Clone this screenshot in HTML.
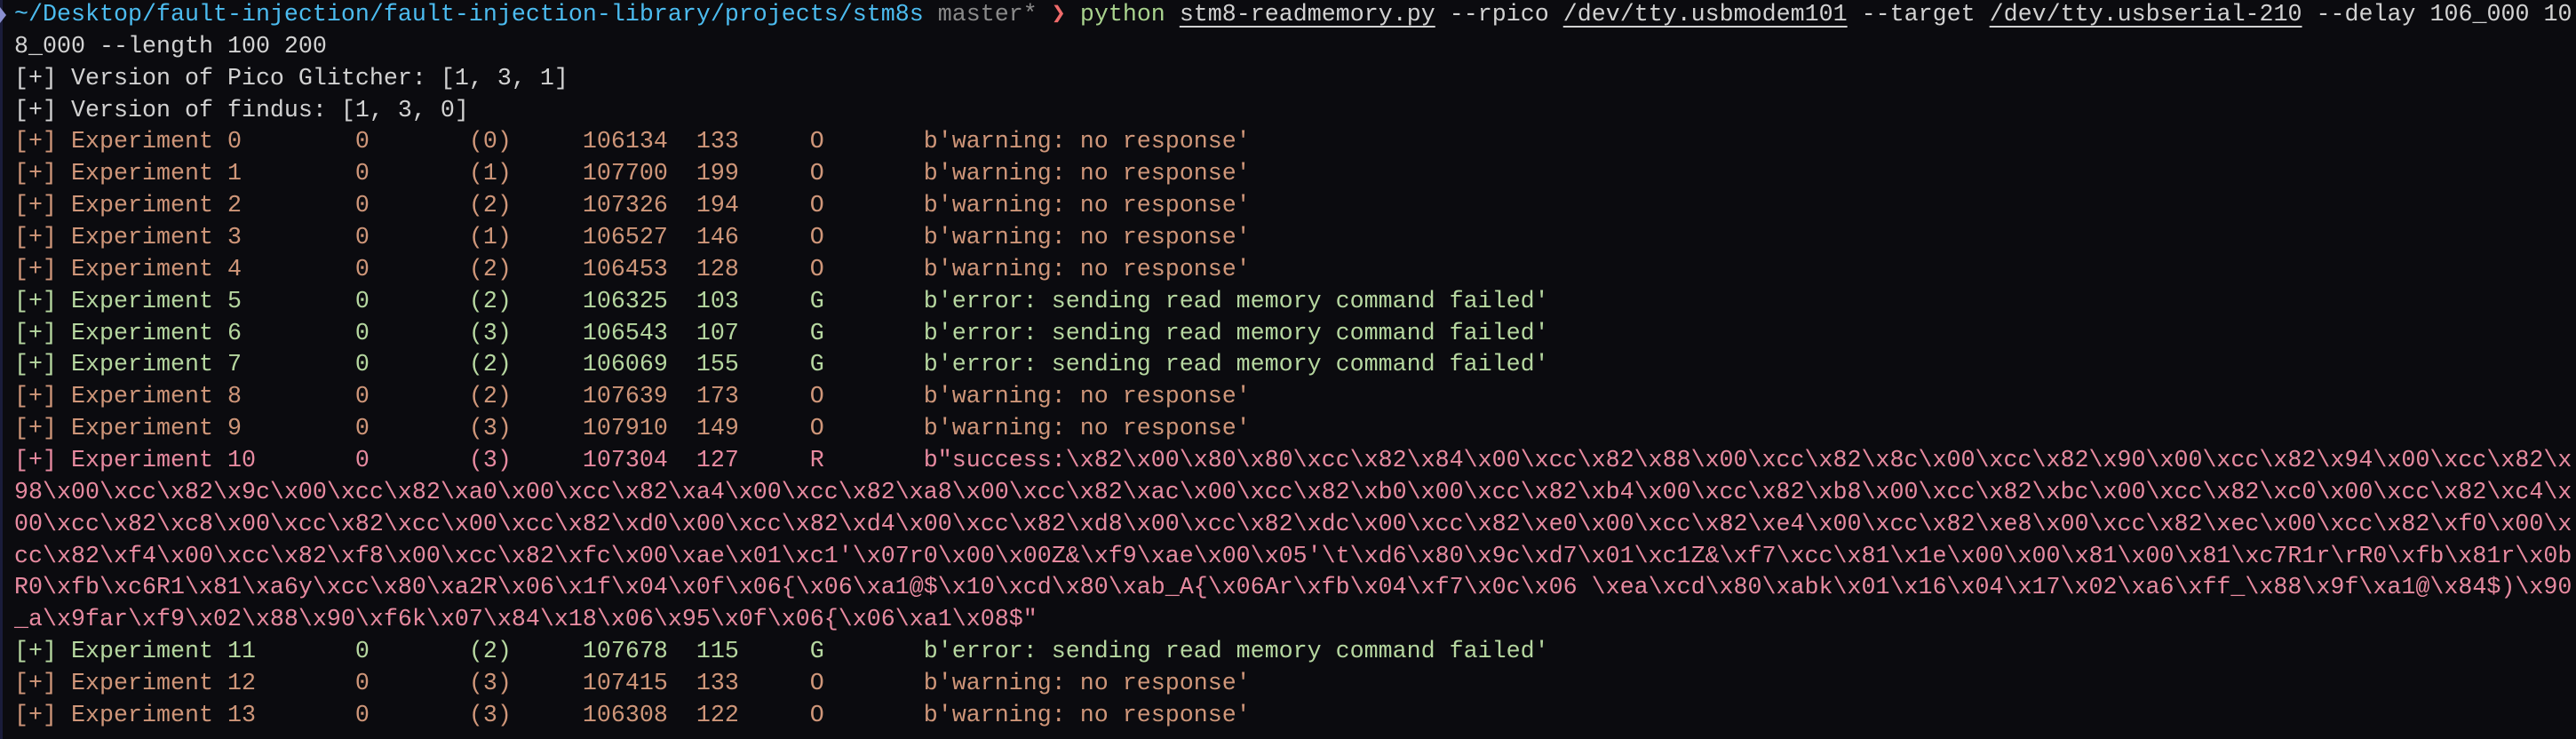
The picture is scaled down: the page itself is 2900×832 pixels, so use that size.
<!DOCTYPE html>
<html><head><meta charset="utf-8"><style>
html,body{margin:0;padding:0;background:#0b0b0f;width:2900px;height:832px;overflow:hidden}
pre{margin:0;position:absolute;left:16px;top:0;font-family:"Liberation Mono","DejaVu Sans Mono",monospace;font-size:26.67px;line-height:35.86px;color:#d2d2d2;white-space:pre}
.b{color:#4cbcf0}.g{color:#8a8a8a}.r{color:#ef6b6b}.p{color:#a9d38e}
.u{text-decoration:underline;text-underline-offset:6px}
.o{color:#cf9679}.n{color:#b6d7a0}.k{color:#e78aa0}
.tri{position:absolute;left:0;top:8px;width:0;height:0;border-left:7px solid #8a8fd0;border-top:9px solid transparent;border-bottom:9px solid transparent}
.bar{position:absolute;left:0;top:0;width:3px;height:832px;background:#1a1c3a}
</style></head><body>
<div class="bar"></div><div class="tri"></div>
<pre><span class="b">~/Desktop/fault-injection/fault-injection-library/projects/stm8s</span> <span class="g">master*</span> <span class="r">❯</span> <span class="p">python</span> <span class="u">stm8-readmemory.py</span> --rpico <span class="u">/dev/tty.usbmodem101</span> --target <span class="u">/dev/tty.usbserial-210</span> --delay 106_000 10
8_000 --length 100 200
[+] Version of Pico Glitcher: [1, 3, 1]
[+] Version of findus: [1, 3, 0]
<span class="o">[+] Experiment 0        0       (0)     106134  133     O       b'warning: no response'</span>
<span class="o">[+] Experiment 1        0       (1)     107700  199     O       b'warning: no response'</span>
<span class="o">[+] Experiment 2        0       (2)     107326  194     O       b'warning: no response'</span>
<span class="o">[+] Experiment 3        0       (1)     106527  146     O       b'warning: no response'</span>
<span class="o">[+] Experiment 4        0       (2)     106453  128     O       b'warning: no response'</span>
<span class="n">[+] Experiment 5        0       (2)     106325  103     G       b'error: sending read memory command failed'</span>
<span class="n">[+] Experiment 6        0       (3)     106543  107     G       b'error: sending read memory command failed'</span>
<span class="n">[+] Experiment 7        0       (2)     106069  155     G       b'error: sending read memory command failed'</span>
<span class="o">[+] Experiment 8        0       (2)     107639  173     O       b'warning: no response'</span>
<span class="o">[+] Experiment 9        0       (3)     107910  149     O       b'warning: no response'</span>
<span class="k">[+] Experiment 10       0       (3)     107304  127     R       b"success:\x82\x00\x80\x80\xcc\x82\x84\x00\xcc\x82\x88\x00\xcc\x82\x8c\x00\xcc\x82\x90\x00\xcc\x82\x94\x00\xcc\x82\x
98\x00\xcc\x82\x9c\x00\xcc\x82\xa0\x00\xcc\x82\xa4\x00\xcc\x82\xa8\x00\xcc\x82\xac\x00\xcc\x82\xb0\x00\xcc\x82\xb4\x00\xcc\x82\xb8\x00\xcc\x82\xbc\x00\xcc\x82\xc0\x00\xcc\x82\xc4\x
00\xcc\x82\xc8\x00\xcc\x82\xcc\x00\xcc\x82\xd0\x00\xcc\x82\xd4\x00\xcc\x82\xd8\x00\xcc\x82\xdc\x00\xcc\x82\xe0\x00\xcc\x82\xe4\x00\xcc\x82\xe8\x00\xcc\x82\xec\x00\xcc\x82\xf0\x00\x
cc\x82\xf4\x00\xcc\x82\xf8\x00\xcc\x82\xfc\x00\xae\x01\xc1'\x07r0\x00\x00Z&amp;\xf9\xae\x00\x05'\t\xd6\x80\x9c\xd7\x01\xc1Z&amp;\xf7\xcc\x81\x1e\x00\x00\x81\x00\x81\xc7R1r\rR0\xfb\x81r\x0b
R0\xfb\xc6R1\x81\xa6y\xcc\x80\xa2R\x06\x1f\x04\x0f\x06{\x06\xa1@$\x10\xcd\x80\xab_A{\x06Ar\xfb\x04\xf7\x0c\x06 \xea\xcd\x80\xabk\x01\x16\x04\x17\x02\xa6\xff_\x88\x9f\xa1@\x84$)\x90
_a\x9far\xf9\x02\x88\x90\xf6k\x07\x84\x18\x06\x95\x0f\x06{\x06\xa1\x08$"</span>
<span class="n">[+] Experiment 11       0       (2)     107678  115     G       b'error: sending read memory command failed'</span>
<span class="o">[+] Experiment 12       0       (3)     107415  133     O       b'warning: no response'</span>
<span class="o">[+] Experiment 13       0       (3)     106308  122     O       b'warning: no response'</span></pre>
</body></html>
